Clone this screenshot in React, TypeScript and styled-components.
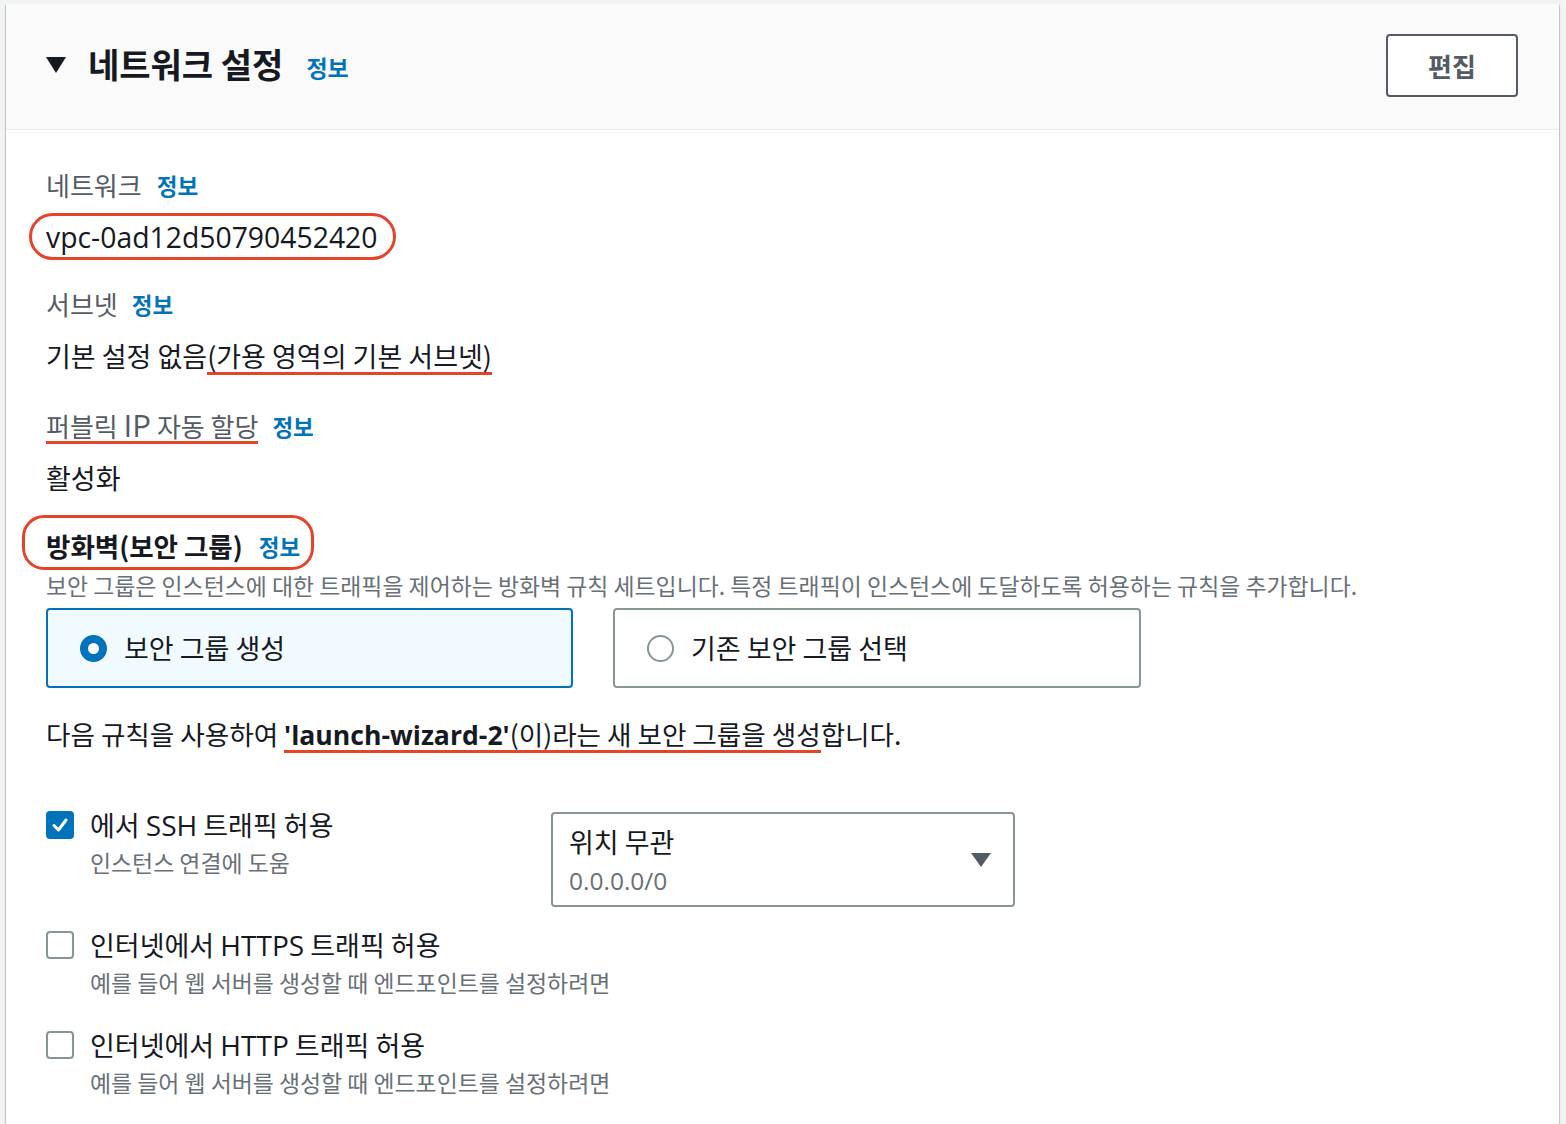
import React from "react";
import styled, { createGlobalStyle } from "styled-components";

const RED = "#e6432b";
const BLUE = "#0073bb";
const GRAY_BORDER = "#879596";

const Global = createGlobalStyle`
  html, body { margin: 0; padding: 0; }
  body {
    background: #f2f3f3;
    font-family: "Noto Sans CJK KR", "Noto Sans", sans-serif;
    color: #16191f;
    overflow: hidden;
  }
`;

const Panel = styled.section`
  margin: 4px 0 0 6px;
  width: 1553px;
  min-height: 1120px;
  background: #ffffff;
  box-shadow: 0 1px 1px 0 rgba(0, 28, 36, 0.3), 1px 1px 1px 0 rgba(0, 28, 36, 0.15),
    -1px 1px 1px 0 rgba(0, 28, 36, 0.15);
`;

const Header = styled.header`
  height: 126px;
  box-sizing: border-box;
  background: #fafafa;
  border-bottom: 1px solid #eaeded;
  display: flex;
  align-items: center;
  padding: 0 41px 0 40px;
`;

const Caret = styled.svg`
  width: 20px;
  height: 16px;
  flex: none;
  margin-bottom: 4px;
`;

const Title = styled.h2`
  margin: 0 0 6px 22px;
  font-size: 34px;
  font-weight: 700;
  line-height: 40px;
  color: #16191f;
`;

const Info = styled.a<{ $gap?: number }>`
  margin-left: ${(p) => p.$gap ?? 14}px;
  font-size: 22.5px;
  font-weight: 700;
  color: ${BLUE};
  text-decoration: none;
  line-height: 30px;
`;

const HeaderInfo = styled(Info)`
  font-size: 23px;
`;

const Spacer = styled.div`
  flex: 1;
`;

const EditButton = styled.button`
  width: 132px;
  height: 63px;
  border: 2px solid #545b64;
  border-radius: 4px;
  background: #ffffff;
  color: #545b64;
  font-family: "Noto Sans CJK KR", sans-serif;
  font-size: 26px;
  font-weight: 700;
  margin-bottom: 3px;
`;

const Body = styled.div`
  padding: 37px 40px 0 40px;
  display: flex;
  flex-direction: column;
`;

const Field = styled.div<{ $mt?: number }>`
  display: flex;
  flex-direction: column;
  align-items: flex-start;
  margin-top: ${(p) => p.$mt ?? 0}px;
`;

const FieldLabel = styled.div`
  display: flex;
  align-items: center;
  font-size: 26px;
  line-height: 36px;
  color: #545b64;
`;

const Value = styled.div`
  margin-top: 16px;
  font-size: 27px;
  line-height: 36px;
  color: #16191f;
`;

const Latin = styled.span<{ $em?: number }>`
  font-family: "Open Sans", "Noto Sans", sans-serif;
  font-size: ${(p) => p.$em ?? 1.04}em;
`;

const Underlined = styled.span`
  background-image: linear-gradient(${RED}, ${RED});
  background-repeat: no-repeat;
  background-position: left bottom;
  background-size: 100% 3px;
`;

const Circled = styled.span<{ $inset: string; $radius: number }>`
  position: relative;
  display: inline-flex;
  align-items: center;
  &::after {
    content: "";
    position: absolute;
    inset: ${(p) => p.$inset};
    border: 3px solid ${RED};
    border-radius: ${(p) => p.$radius}px;
    pointer-events: none;
  }
`;

const Heading = styled.div`
  margin-top: 32px;
  display: flex;
`;

const HeadingText = styled.span`
  font-size: 26.5px;
  font-weight: 700;
  line-height: 36px;
  color: #16191f;
`;

const Description = styled.div`
  margin-top: 6px;
  font-size: 22.9px;
  line-height: 30px;
  color: #687078;
  white-space: nowrap;
`;

const Tiles = styled.div`
  margin-top: 8px;
  display: grid;
  grid-template-columns: 527px 528px;
  column-gap: 40px;
`;

const Tile = styled.label<{ $selected?: boolean }>`
  height: 80px;
  box-sizing: border-box;
  display: flex;
  align-items: center;
  gap: 17px;
  padding-left: 32px;
  border: 2px solid ${(p) => (p.$selected ? BLUE : GRAY_BORDER)};
  border-radius: 4px;
  background: ${(p) => (p.$selected ? "#f1faff" : "#ffffff")};
  font-size: 27px;
  line-height: 36px;
  color: #16191f;
`;

const Radio = styled.span<{ $checked?: boolean }>`
  width: 27px;
  height: 27px;
  box-sizing: border-box;
  border-radius: 50%;
  background: #ffffff;
  border: ${(p) => (p.$checked ? `8px solid ${BLUE}` : `2px solid ${GRAY_BORDER}`)};
  flex: none;
`;

const Sentence = styled.div`
  margin-top: 28px;
  font-size: 26.6px;
  line-height: 36px;
  color: #16191f;
  white-space: nowrap;
`;

const Rows = styled.div`
  margin-top: 54px;
  display: flex;
  flex-direction: column;
  gap: 20px;
`;

const CheckRow = styled.div`
  display: flex;
  align-items: flex-start;
  min-height: 80px;
`;

const CheckLeft = styled.div`
  width: 505px;
  display: flex;
  align-items: flex-start;
  gap: 16px;
  flex: none;
  white-space: nowrap;
`;

const Box = styled.span<{ $checked?: boolean }>`
  width: 28px;
  height: 28px;
  box-sizing: border-box;
  margin-top: 4px;
  border-radius: 4px;
  flex: none;
  display: flex;
  align-items: center;
  justify-content: center;
  background: ${(p) => (p.$checked ? BLUE : "#ffffff")};
  border: 2px solid ${(p) => (p.$checked ? BLUE : GRAY_BORDER)};
`;

const CheckText = styled.div`
  display: flex;
  flex-direction: column;
`;

const CheckLabel = styled.div`
  font-size: 27px;
  line-height: 36px;
  color: #16191f;
`;

const CheckDesc = styled.div`
  margin-top: 4px;
  font-size: 22.9px;
  line-height: 30px;
  color: #687078;
`;

const Select = styled.div`
  margin-top: 5px;
  width: 464px;
  height: 95px;
  box-sizing: border-box;
  border: 2px solid ${GRAY_BORDER};
  border-radius: 4px;
  display: flex;
  align-items: center;
  padding: 0 22px 0 16px;
`;

const SelectText = styled.div`
  flex: 1;
  display: flex;
  flex-direction: column;
  align-self: flex-start;
  padding-top: 10px;
`;

const SelectMain = styled.div`
  font-size: 27px;
  line-height: 36px;
  color: #16191f;
`;

const SelectSub = styled.div`
  margin-top: 6px;
  font-family: "Open Sans", sans-serif;
  font-size: 24.5px;
  line-height: 30px;
  color: #687078;
`;

const Arrow = styled.svg`
  width: 20px;
  height: 14px;
  flex: none;
`;

const Check = () => (
  <svg width="18" height="18" viewBox="0 0 18 18">
    <polyline
      points="3,9.5 7.5,14 15,4"
      fill="none"
      stroke="#ffffff"
      strokeWidth="3"
      strokeLinecap="round"
      strokeLinejoin="round"
    />
  </svg>
);

export default function App() {
  return (
    <>
      <Global />
      <Panel>
        <Header>
          <Caret viewBox="0 0 20 16">
            <polygon points="0,0 20,0 10,16" fill="#16191f" />
          </Caret>
          <Title>네트워크 설정</Title>
          <HeaderInfo $gap={23}>정보</HeaderInfo>
          <Spacer />
          <EditButton>편집</EditButton>
        </Header>
        <Body>
          <Field>
            <FieldLabel>
              네트워크<Info $gap={15}>정보</Info>
            </FieldLabel>
            <Value>
              <Circled $inset="-6px -18px -5px -17px" $radius={24}>
                <Latin $em={1.05}>vpc-0ad12d50790452420</Latin>
              </Circled>
            </Value>
          </Field>
          <Field $mt={31}>
            <FieldLabel>
              서브넷<Info>정보</Info>
            </FieldLabel>
            <Value>
              기본 설정 없음<Underlined>(가용 영역의 기본 서브넷)</Underlined>
            </Value>
          </Field>
          <Field $mt={33}>
            <FieldLabel>
              <Underlined>
                퍼블릭 <Latin $em={1.2}>IP</Latin> 자동 할당
              </Underlined>
              <Info>정보</Info>
            </FieldLabel>
            <Value>활성화</Value>
          </Field>
          <Heading>
            <Circled $inset="-13px -14px -6px -24px" $radius={22}>
              <HeadingText>방화벽(보안 그룹)</HeadingText>
              <Info $gap={16}>정보</Info>
            </Circled>
          </Heading>
          <Description>
            보안 그룹은 인스턴스에 대한 트래픽을 제어하는 방화벽 규칙 세트입니다. 특정 트래픽이 인스턴스에 도달하도록
            허용하는 규칙을 추가합니다.
          </Description>
          <Tiles>
            <Tile $selected>
              <Radio $checked />
              보안 그룹 생성
            </Tile>
            <Tile>
              <Radio />
              기존 보안 그룹 선택
            </Tile>
          </Tiles>
          <Sentence>
            다음 규칙을 사용하여{" "}
            <Underlined>
              <Latin $em={1.0}>
                <b>'launch-wizard-2'</b>
              </Latin>
              (이)라는 새 보안 그룹을 생성
            </Underlined>
            합니다.
          </Sentence>
          <Rows>
            <CheckRow>
              <CheckLeft>
                <Box $checked>
                  <Check />
                </Box>
                <CheckText>
                  <CheckLabel>
                    에서 <Latin>SSH</Latin> 트래픽 허용
                  </CheckLabel>
                  <CheckDesc>인스턴스 연결에 도움</CheckDesc>
                </CheckText>
              </CheckLeft>
              <Select>
                <SelectText>
                  <SelectMain>위치 무관</SelectMain>
                  <SelectSub>0.0.0.0/0</SelectSub>
                </SelectText>
                <Arrow viewBox="0 0 20 14">
                  <polygon points="0,0 20,0 10,14" fill="#545b64" />
                </Arrow>
              </Select>
            </CheckRow>
            <CheckRow>
              <CheckLeft>
                <Box />
                <CheckText>
                  <CheckLabel>
                    인터넷에서 <Latin>HTTPS</Latin> 트래픽 허용
                  </CheckLabel>
                  <CheckDesc>예를 들어 웹 서버를 생성할 때 엔드포인트를 설정하려면</CheckDesc>
                </CheckText>
              </CheckLeft>
            </CheckRow>
            <CheckRow>
              <CheckLeft>
                <Box />
                <CheckText>
                  <CheckLabel>
                    인터넷에서 <Latin>HTTP</Latin> 트래픽 허용
                  </CheckLabel>
                  <CheckDesc>예를 들어 웹 서버를 생성할 때 엔드포인트를 설정하려면</CheckDesc>
                </CheckText>
              </CheckLeft>
            </CheckRow>
          </Rows>
        </Body>
      </Panel>
    </>
  );
}
